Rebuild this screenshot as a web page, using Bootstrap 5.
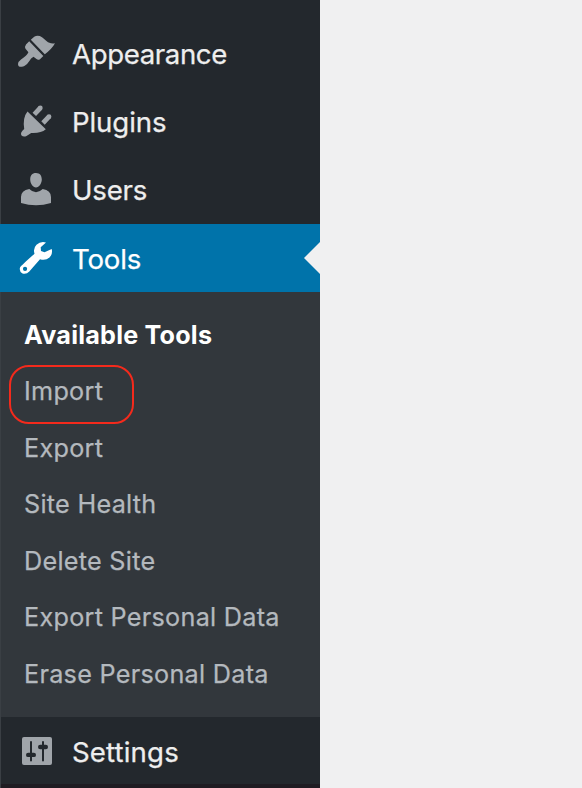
<!DOCTYPE html>
<html lang="en">
<head>
<meta charset="utf-8">
<meta name="viewport" content="width=device-width, initial-scale=1">
<title>Tools</title>
<link href="https://cdn.jsdelivr.net/npm/bootstrap@5.3.0/dist/css/bootstrap.min.css" rel="stylesheet">
<style>
body{background:#f0f0f1;font-family:Inter,"Liberation Sans",sans-serif;height:788px;overflow:hidden}
.side{width:320px;height:788px;background:#23282d;padding-top:20px;color:#eee;border-left:1px solid #3a3f44}
.side>*{flex-shrink:0}
.side a{color:inherit;white-space:nowrap}
.main-item{height:68px;padding-left:15px;font-size:27.6px;font-weight:400;line-height:66px;letter-spacing:-.2px}
.main-item span{padding-bottom:1px;-webkit-text-stroke:.25px currentColor}
.main-item.current span{padding:2px 0 0}
.main-item .wide{letter-spacing:-.38px}
.main-item .plug{letter-spacing:-.1px}
.main-item .sett{letter-spacing:.15px;padding:1px 0 0}
.main-item svg{width:40px;height:40px;margin-right:16px;fill:#a0a5aa;stroke:none;flex:none}
.main-item.current{background:#0073aa;color:#fff;margin-left:-1px;padding-left:16px}
.main-item.current svg{fill:#fff}
.notch{right:0;top:18px;width:16px;height:32px;background:#f0f0f1;clip-path:polygon(100% 0,0 50%,100% 100%)}
.sub{height:425px;background:#32373c;padding:14.5px 0 0 23px;font-size:25.2px;font-weight:400;letter-spacing:.28px;color:#b4b9be}
.sub a{height:56.5px;line-height:56.5px;display:block;-webkit-text-stroke:.25px currentColor}
.sub a.chosen{color:#fff;font-weight:650;letter-spacing:.2px;-webkit-text-stroke:0}
.ring{left:-15px;top:2px;width:125px;height:59px;border:2px solid #f42a1c;border-radius:20px}
.foot{height:4px;background:#1f1c22;margin-top:-1px}
</style>
<script src="https://cdn.jsdelivr.net/npm/bootstrap@5.3.0/dist/js/bootstrap.bundle.min.js"></script>
</head>
<body>
<nav class="side nav flex-column flex-nowrap">
  <a href="#" class="main-item d-flex align-items-center text-decoration-none">
    <svg viewBox="16 34 40 40"><path d="M29.2 41.3 43.3 56 40 59.2Q38 60.3 36.5 59L33.5 56.7Q31 58 29 61.5 26 66 22 66.8 18 67.3 18 64 18 61.7 21 59.5 27 55.5 28.4 52.3L25.5 48.8Q24.5 46.5 26 44.5Z"/><path d="M30.8 39.8 34.2 36.7Q38 34.7 42 37.2C46 40 48 44.3 55 43.2Q52 48.8 44.8 54.2Z"/></svg>
    <span class="wide">Appearance</span></a>
  <a href="#" class="main-item d-flex align-items-center text-decoration-none">
    <svg viewBox="16 102 40 40"><path d="M27.5 111.5 45.8 129.3Q41 133.5 31.2 133L26.5 136Q23.5 137.5 21.3 135.3 20 132.5 24.2 129 22.5 117.5 27.5 111.5Z"/><path d="M34.3 114.3 40.3 108M43 123 49 116.7" stroke="#a0a5aa" stroke-width="4.8"/><circle cx="40.3" cy="108" r="2.4"/><circle cx="49" cy="116.7" r="2.4"/></svg>
    <span class="plug">Plugins</span></a>
  <a href="#" class="main-item d-flex align-items-center text-decoration-none">
    <svg viewBox="16 170 40 40"><path d="M36 173C40 173 41.8 175.8 41.8 179.5S39 187.5 36 187.5 30.2 183.5 30.2 179.5 32 173 36 173ZM29.3 189Q36 195.5 42.7 189 51 190.5 51 197V203Q36 207.5 21 203V197Q21 190.5 29.3 189Z"/></svg>
    <span>Users</span></a>
  <a href="#" class="main-item current position-relative d-flex align-items-center text-decoration-none">
    <svg viewBox="16 238 40 40"><path fill-rule="evenodd" d="M46 242.5 40.7 247.2 41 251 44.5 252.3 51.7 249Q53 254 49.5 257.5 45.5 261 40 259.3L29.3 271.5Q26.5 274.5 22.5 273.5 19 271.5 20 267.5 20.5 266 34.5 253.8 32.8 248.5 36.5 244.8 40.5 241 46 242.5ZM25 266.8a2.1 2.1 0 1 0 .1 4.2 2.1 2.1 0 0 0-.1-4.2Z"/></svg>
    <span>Tools</span><i class="notch position-absolute"></i></a>
  <div class="sub">
    <a href="#" class="chosen text-decoration-none">Available Tools</a>
    <a href="#" class="position-relative text-decoration-none">Import<i class="ring position-absolute"></i></a>
    <a href="#" class="text-decoration-none">Export</a>
    <a href="#" class="text-decoration-none">Site Health</a>
    <a href="#" class="text-decoration-none">Delete Site</a>
    <a href="#" class="text-decoration-none">Export Personal Data</a>
    <a href="#" class="text-decoration-none">Erase Personal Data</a>
  </div>
  <a href="#" class="main-item d-flex align-items-center text-decoration-none">
    <svg viewBox="16 731 40 40"><rect x="22" y="737" width="30" height="28" rx="2"/><path d="M31 742V760.5M43 742V760.5" stroke="#23282d" stroke-width="2" stroke-linecap="round"/><g fill="#23282d"><rect x="26" y="752.7" width="10" height="4.4" rx="2.2"/><rect x="38" y="744.8" width="10" height="4.4" rx="2.2"/></g></svg>
    <span class="sett">Settings</span></a>
  <div class="foot"></div>
</nav>
</body>
</html>
